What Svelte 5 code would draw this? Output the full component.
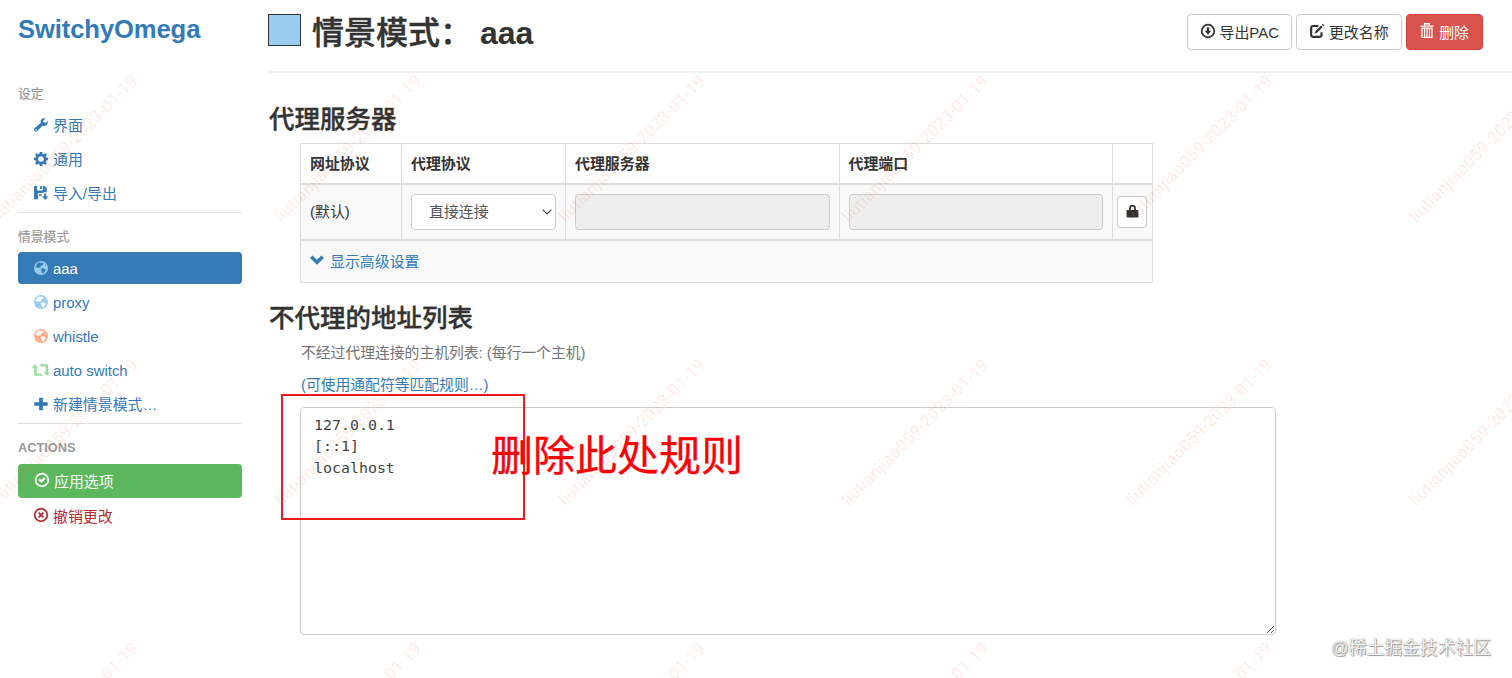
<script lang="ts">
  type NavItem = { icon: string; label: string; color?: string; active?: boolean };

  const settings: NavItem[] = [
    { icon: 'wrench', label: '界面' },
    { icon: 'cog', label: '通用' },
    { icon: 'save', label: '导入/导出' },
  ];

  const profiles: NavItem[] = [
    { icon: 'globe', label: 'aaa', color: '#99ccee', active: true },
    { icon: 'globe', label: 'proxy', color: '#99ccee' },
    { icon: 'globe', label: 'whistle', color: '#ffaa88' },
    { icon: 'retweet', label: 'auto switch', color: '#99dd99' },
    { icon: 'plus', label: '新建情景模式…' },
  ];

  let bypassList = $state('127.0.0.1\n[::1]\nlocalhost');

  // Diagonal stamp repeated over the whole page
  const stampStep = 283.6;
  const stamps = [0, 1, 2].flatMap((row) =>
    [0, 1, 2, 3, 4, 5].map((col) => ({
      x: -2 + col * stampStep,
      y: 223 + row * stampStep,
    }))
  );
</script>

{#snippet icon(name: string, color: string = 'currentColor')}
  <svg class="icon icon-{name}" viewBox="0 0 16 16" style:color fill="currentColor">
    {#if name === 'wrench'}
      <path d="M15.8 3.3 13.2 5.5 10.8 4.900 10.500 3 13 .5C10.900-.4 8.700.6 7.800 2.700c-.4.9-.3 1.900 0 2.700L.7 11.700c-1 .9-1 2.200-.2 3.100.9.900 2.200.8 3.100 0L9.800 8.800c2.900 1 6.200-1.300 6-5.500zM2.200 14.200a.8.8 0 1 1 0-1.600.8.8 0 0 1 0 1.600z" />
    {:else if name === 'cog'}
      <path fill-rule="evenodd" d="M6.600 0h2.800l.4 2.100 1.300.5L12.900 1.300l1.900 1.900-1.300 1.800.5 1.300 2.100.4v2.700l-2.100.4-.5 1.300 1.300 1.800-1.900 1.900-1.800-1.300-1.300.5-.4 2.100H6.600l-.4-2.100-1.300-.5-1.800 1.300-1.900-1.900 1.300-1.800L2 9.800-.1 9.400V6.700L2 6.300 2.500 5 1.200 3.200l1.900-1.900 1.800 1.300 1.300-.5zM8 4.900a3.150 3.150 0 1 0 0 6.300 3.150 3.150 0 0 0 0-6.300z" />
    {:else if name === 'save'}
      <path d="M0 0h3.500v5h6.500V0h2L14.500 2.500V7H11v1H4.500v7H0zM7 0h2v3.500H7zM11.500 8.500H14v3.500h2.500l-3.700 4L9 12h2.500zM5.500 9.500H9v1.500H5.500z" />
    {:else if name === 'globe'}
      <path fill-rule="evenodd" d="M8 0a8 8 0 1 0 0 16A8 8 0 0 0 8 0zM5 1.900l1.800-.6.7 1.100 2-.4 1.800.8-.8 1.500-1.500.1-.4 1.300-1.500.7.4 1.500-1.800-.5L4.400 8 2.700 6.800l-.9 1.100C1.800 5.300 3 3 5 1.900zM9.300 8.200l2.400.5 1.700 1.700-1.500 2.200-1.500 1.600-1.500-.7-.3-2.400L7.300 9.700zM12.700 3.800l1.200 2-1.400-.4z" />
    {:else if name === 'retweet'}
      <path d="M3.300 1.500 7 6H5v6.200h5.300l2.200 2.500H2.200V6H-.4zM8 1.500h10.200v8.700h2.300L16.900 14.700 13.200 10.200h2.200V4H10.200z" transform="translate(-2 0)" />
    {:else if name === 'plus'}
      <path d="M5.900.8h4.200v5.100h5.600v4.200h-5.600v5.100H5.900v-5.100H.3V5.900h5.600z" />
    {:else if name === 'ok'}
      <circle cx="8" cy="8" r="7.200" fill="none" stroke="currentColor" stroke-width="2" />
      <path d="m4 8 1.600-1.600 1.700 1.700 3.200-3.200L12.100 6.500l-4.800 4.900z" />
    {:else if name === 'remove'}
      <circle cx="8" cy="8" r="7.200" fill="none" stroke="currentColor" stroke-width="2" />
      <path d="m5.300 5.300 5.400 5.400m0-5.400-5.400 5.400" stroke="currentColor" stroke-width="2.100" />
    {:else if name === 'download'}
      <circle cx="8" cy="8" r="7.200" fill="none" stroke="currentColor" stroke-width="2" />
      <path d="M6.700 3.800h2.600v4h2.400L8 12.300 4.300 7.800h2.400z" />
    {:else if name === 'edit'}
      <path d="M9.700 2.300H3.500a2.200 2.200 0 0 0-2.200 2.200v8a2.200 2.200 0 0 0 2.200 2.200H11a2.200 2.200 0 0 0 2.200-2.200V9.500" fill="none" stroke="currentColor" stroke-width="2.500" />
      <path d="m12.700 1.600 1.900 1.900-6.200 6.300-3.200 1.300 1.200-3.200zM13.500.8l1-1L16.500 1.700l-1 1z" />
    {:else if name === 'trash'}
      <path d="M5.300 1.500V-.3h5.400v1.800M.5 2.400h15" fill="none" stroke="currentColor" stroke-width="1.500" />
      <path d="M2.300 4.700h11.400v10.600H2.300zM5.200 5v10M8 5v10M10.800 5v10" fill="none" stroke="currentColor" stroke-width="1.400" />
    {:else if name === 'lock'}
      <path d="M4.900 7V3.900a3.100 3.100 0 0 1 6.200 0V7" fill="none" stroke="currentColor" stroke-width="2.200" />
      <rect x=".7" y="6" width="14.600" height="9.500" rx="1" />
    {:else if name === 'chevron'}
      <path d="m0 5.700 2.900-2.900L8 7.700l5.100-4.900L16 5.700l-8 7.700z" />
    {/if}
  </svg>
{/snippet}

{#snippet navItem(item: NavItem)}
  <li class:active={item.active}>
    <a href="#/{item.label}">{@render icon(item.icon, item.color)}<span>{item.label}</span></a>
  </li>
{/snippet}

<div class="page">
  <nav class="sidebar">
    <h1 class="brand">SwitchyOmega</h1>

    <ul class="nav">
      <li class="nav-header">设定</li>
      {#each settings as item}
        {@render navItem(item)}
      {/each}
      <li class="divider"></li>

      <li class="nav-header">情景模式</li>
      {#each profiles as item}
        {@render navItem(item)}
      {/each}
      <li class="divider"></li>

      <li class="nav-header bold">ACTIONS</li>
      <li class="apply"><a href="#/apply">{@render icon('ok')}<span>应用选项</span></a></li>
      <li class="revert"><a href="#/revert">{@render icon('remove')}<span>撤销更改</span></a></li>
    </ul>
  </nav>

  <main class="content">
    <header class="page-header">
      <span class="profile-color"></span>
      <h2>情景模式：<span class="profile-name">aaa</span></h2>
      <div class="actions">
        <button class="btn">{@render icon('download')}导出PAC</button>
        <button class="btn">{@render icon('edit')}更改名称</button>
        <button class="btn btn-danger">{@render icon('trash')}删除</button>
      </div>
    </header>

    <section class="servers">
      <h3>代理服务器</h3>
      <table>
        <colgroup>
          <col class="col-scheme" />
          <col class="col-protocol" />
          <col class="col-server" />
          <col class="col-port" />
          <col class="col-auth" />
        </colgroup>
        <thead>
          <tr>
            <th>网址协议</th>
            <th>代理协议</th>
            <th>代理服务器</th>
            <th>代理端口</th>
            <th></th>
          </tr>
        </thead>
        <tbody>
          <tr class="server-row">
            <td>(默认)</td>
            <td>
              <div class="select">
                <select class="control"><option>直接连接</option></select>
                <svg class="caret" viewBox="0 0 10 6" fill="none" stroke="currentColor" stroke-width="1.100">
                  <path d="m.6.7 4.400 4.300L9.400.7" />
                </svg>
              </div>
            </td>
            <td><input class="control" type="text" disabled /></td>
            <td><input class="control" type="text" disabled /></td>
            <td class="auth"><button class="btn btn-auth" aria-label="auth">{@render icon('lock')}</button></td>
          </tr>
          <tr class="advanced">
            <td colspan="5"><a href="#/advanced">{@render icon('chevron')}<span>显示高级设置</span></a></td>
          </tr>
        </tbody>
      </table>
    </section>

    <section class="bypass">
      <h3>不代理的地址列表</h3>
      <p class="help">不经过代理连接的主机列表: (每行一个主机)</p>
      <p class="help"><a href="#/patterns">(可使用通配符等匹配规则…)</a></p>
      <textarea bind:value={bypassList} spellcheck="false"></textarea>
    </section>
  </main>

  <!-- Watermarks and the note drawn over the page -->
  <svg class="stamps" width="1512" height="678">
    {#each stamps as stamp}
      <text transform="translate({stamp.x} {stamp.y}) rotate(-45)" textLength="199">liutianjiao059-2023-01-19</text>
    {/each}
  </svg>
  <div class="note-box"></div>
  <div class="note-text">删除此处规则</div>
  <div class="credit">@稀土掘金技术社区</div>
</div>

<style>
  :global(body) {
    background: #fff;
  }

  .page {
    position: relative;
    display: flex;
    width: 1512px;
    height: 678px;
    overflow: hidden;
    box-sizing: border-box;
    padding-left: 18px;
    gap: 27px;
    font-family: 'Liberation Sans', 'Noto Sans CJK SC', sans-serif;
    font-size: 14.93px;
    line-height: 21px;
    color: #333;
  }

  .page * {
    box-sizing: border-box;
  }

  a {
    color: #337ab7;
    text-decoration: none;
  }

  h1,
  h2,
  h3,
  p {
    margin: 0;
  }

  .icon {
    width: 14px;
    height: 14px;
    flex-shrink: 0;
    overflow: visible;
  }

  /* Sidebar */
  .sidebar {
    width: 224px;
    flex-shrink: 0;
  }

  .brand {
    height: 84px;
    padding-top: 14px;
    font-size: 25.6px;
    line-height: 30px;
    letter-spacing: -0.1px;
    font-weight: 700;
    color: #337ab7;
  }

  .nav {
    display: flex;
    flex-direction: column;
    gap: 2px;
    margin: 0;
    padding: 0;
    list-style: none;
  }

  .nav-header {
    height: 23px;
    font-size: 12.8px;
    line-height: 20px;
    color: #999;
    -webkit-text-stroke: 0.2px #999;
  }

  .nav-header.bold {
    font-weight: 700;
    -webkit-text-stroke: 0;
  }

  .nav a {
    display: flex;
    align-items: center;
    gap: 5px;
    height: 32px;
    padding-top: 1px;
    padding-left: 16px;
    border-radius: 4px;
  }

  .nav .icon {
    position: relative;
    top: -1px;
  }

  .active a {
    background: #337ab7;
    color: #fff;
  }

  .divider {
    height: 1px;
    margin: 1px 0 12px;
    background: #e0e0e0;
  }

  .apply a {
    height: 34px;
    margin-top: 1px;
    padding-top: 0;
    padding-left: 17px;
    background: #5cb85c;
    color: #fff;
  }

  .revert a {
    padding-top: 0;
    color: #b52b33;
  }

  /* Main column */
  .content {
    flex: 1;
  }

  .page-header {
    display: flex;
    align-items: flex-start;
    height: 73px;
    margin-left: -1px;
    padding: 14px 29px 0 0;
    border-bottom: 2px solid #f1f1f1;
  }

  .profile-color {
    width: 33px;
    height: 32px;
    margin-right: 11px;
    background: #99ccee;
    border: 1px solid #333;
  }

  h2 {
    font-size: 32px;
    line-height: 38px;
    font-weight: 500;
    -webkit-text-stroke: 0.4px currentColor;
  }

  .profile-name {
    margin-left: 8px;
    font-weight: 700;
    -webkit-text-stroke: 0;
  }

  .actions {
    display: flex;
    gap: 4px;
    margin-left: auto;
  }

  .btn {
    display: flex;
    align-items: center;
    justify-content: center;
    gap: 5px;
    height: 36px;
    padding: 0 12.5px;
    border: 1px solid #ccc;
    border-radius: 4px;
    background: #fff;
    color: #333;
    font: inherit;
  }

  .btn .icon {
    position: relative;
    top: -1px;
  }

  .btn-danger {
    padding: 0 13px;
    border-color: #d43f3a;
    background: #d9534f;
    color: #fff;
  }

  h3 {
    font-size: 25.5px;
    line-height: 30px;
    font-weight: 500;
    -webkit-text-stroke: 0.35px currentColor;
  }

  .servers {
    padding-top: 31px;
  }

  table {
    width: 852px;
    margin: 9px 0 0 31px;
    table-layout: fixed;
    border-collapse: collapse;
    border: 1px solid #ddd;
  }

  .col-scheme {
    width: 101px;
  }

  .col-protocol {
    width: 164px;
  }

  .col-server,
  .col-port {
    width: 273.5px;
  }

  .col-auth {
    width: 40px;
  }

  th,
  td {
    padding: 0 9px;
    border: 1px solid #ddd;
    text-align: left;
    vertical-align: middle;
  }

  th {
    height: 40px;
    border-bottom-width: 2px;
    font-weight: 700;
  }

  .server-row td {
    height: 56px;
    border-bottom-width: 2px;
    background: #f9f9f9;
  }

  .advanced td {
    height: 43px;
    background: #f9f9f9;
  }

  .advanced a {
    display: flex;
    align-items: center;
    gap: 6px;
  }

  .advanced .icon {
    position: relative;
    top: -1px;
  }

  .control {
    display: block;
    width: 100%;
    height: 36px;
    padding: 0 17px;
    border: 1px solid #ccc;
    border-radius: 4px;
    background: #fff;
    color: #555;
    font: inherit;
    appearance: none;
  }

  .control:disabled {
    background: #eee;
  }

  .select {
    position: relative;
  }

  .caret {
    position: absolute;
    right: 4px;
    top: 15px;
    width: 10px;
    height: 6px;
    color: #444;
  }

  td.auth {
    padding: 0 4px;
  }

  .btn-auth {
    width: 30px;
    height: 32px;
    padding: 0;
    border-radius: 3px;
  }

  .btn-auth .icon {
    top: 0;
    width: 13px;
    height: 13px;
  }

  .bypass {
    padding-top: 20px;
  }

  .help {
    margin: 10px 0 11px 32px;
    font-size: 14.8px;
    color: #737373;
  }

  textarea {
    display: block;
    width: 976px;
    height: 228px;
    margin: 10px 0 0 31px;
    padding: 7px 13px 6px;
    border: 1px solid #ccc;
    border-radius: 4px;
    background: #fff;
    color: #444;
    font-family: 'DejaVu Sans Mono', monospace;
    font-size: 14.93px;
    line-height: 21.33px;
    outline: none;
  }

  /* Overlays */
  .stamps {
    position: absolute;
    inset: 0;
    pointer-events: none;
    font-family: Roboto, sans-serif;
    font-size: 17px;
    fill: rgba(240, 80, 60, 0.12);
  }

  .note-box {
    position: absolute;
    left: 281px;
    top: 394px;
    width: 244px;
    height: 126px;
    border: 2px solid #f5191c;
    pointer-events: none;
  }

  .note-text {
    position: absolute;
    left: 491px;
    top: 427px;
    font-size: 42px;
    line-height: 60px;
    color: #fb0207;
    -webkit-text-stroke: 0.3px #fb0207;
    white-space: nowrap;
  }

  .credit {
    position: absolute;
    right: 21px;
    bottom: 17px;
    font-size: 17.8px;
    line-height: 26px;
    color: #f4f4f4;
    text-shadow: 0 0 1px #777, 1px 1px 1px #999;
    white-space: nowrap;
  }
</style>
